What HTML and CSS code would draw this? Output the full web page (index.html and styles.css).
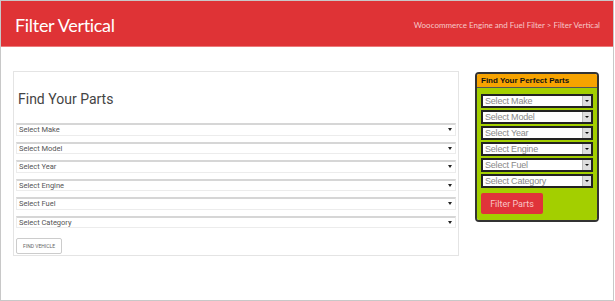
FILE: index.html
```html
<!DOCTYPE html>
<html lang="en">
<head>
  <meta charset="UTF-8" />
  <title>Filter Vertical</title>
  <link rel="stylesheet" href="styles.css">
</head>
<body>
  <div class="frame">
    <!-- Page header -->
    <div class="topbar">
      <h1>Filter Vertical</h1>
      <div class="crumbs">Woocommerce Engine and Fuel Filter &gt; Filter Vertical</div>
    </div>

    <div class="content">
      <!-- Main filter form -->
      <div class="parts-box">
        <h2>Find Your Parts</h2>
        <div class="pick">Select Make</div>
        <div class="pick">Select Model</div>
        <div class="pick">Select Year</div>
        <div class="pick">Select Engine</div>
        <div class="pick">Select Fuel</div>
        <div class="pick">Select Category</div>
        <button class="find-btn">FIND VEHICLE</button>
      </div>

      <!-- Sidebar widget -->
      <div class="widget">
        <div class="widget-head">Find Your Perfect Parts</div>
        <div class="widget-body">
          <div class="wpick">Select Make</div>
          <div class="wpick">Select Model</div>
          <div class="wpick">Select Year</div>
          <div class="wpick">Select Engine</div>
          <div class="wpick">Select Fuel</div>
          <div class="wpick">Select Category</div>
          <button class="filter-btn">Filter Parts</button>
        </div>
      </div>
    </div>
  </div>
</body>
</html>
```

FILE: styles.css
```css
body { margin: 0; background: #fff; }
.frame { width: 612px; height: 299px; border: 1px solid #c8c8c8; }

.topbar { height: 45px; background: #df3336; border-bottom: 1px solid #ec7a7a; display: flex; align-items: center; justify-content: space-between; padding: 0 13px 0 14px; }
.topbar h1 { margin: 0; font: 18px Lato, sans-serif; letter-spacing: -0.3px; color: #fff; position: relative; top: 1px; }
.crumbs { font: 8px Lato, sans-serif; color: #f6c9c9; position: relative; top: 1px; }

.content { display: flex; align-items: flex-start; padding: 24px 13px 0 12px; gap: 16px; }

.parts-box { width: 440px; height: 179px; border: 1px solid #e4e4e4; padding: 0 2px 4px 2px; }
.parts-box h2 { margin: 19px 0 16px 2px; font: 14px Roboto, sans-serif; color: #444; }
.pick { position: relative; height: 9.5px; margin-bottom: 6px; border: 1px solid #ececec; border-top: 2px solid #d6d6d6; padding-left: 2px; font: 7.5px/9.5px Roboto, sans-serif; color: #555; }
.pick::after { content: ""; position: absolute; right: 3px; top: 3px; border: 2.5px solid transparent; border-top: 3px solid #222; }
.find-btn { margin-top: 2px; width: 46px; height: 16px; padding: 0; background: #fff; border: 1px solid #ccc; border-radius: 2px; font: 5px Roboto, sans-serif; color: #666; }

.widget { width: 120px; margin-top: 1px; border: 2px solid #333; border-radius: 4px; overflow: hidden; }
.widget-head { height: 13px; background: #f7a300; border-bottom: 1px solid #555; padding-left: 4px; font: bold 8px/13px "Liberation Sans", Arial, sans-serif; color: #111; }
.widget-body { background: #a3cf00; padding: 6px 4px 6px 4px; }
.wpick { position: relative; height: 10px; margin-bottom: 2px; border: 2px solid #222; background: #fff; padding-left: 2px; font: 9px/10px "Liberation Sans", Arial, sans-serif; color: #888; letter-spacing: -0.2px; }
.wpick::after { content: ""; position: absolute; right: 0; top: 0; width: 8px; height: 10px; background: #ddd; border-left: 1px solid #bbb; }
.wpick::before { content: ""; position: absolute; right: 2px; top: 4px; z-index: 1; border: 2px solid transparent; border-top: 2px solid #111; }
.filter-btn { margin-top: 3px; width: 62px; height: 21px; background: #e0333a; border: none; border-radius: 2px; font: 9px Roboto, sans-serif; color: #f9c6c6; }
```
